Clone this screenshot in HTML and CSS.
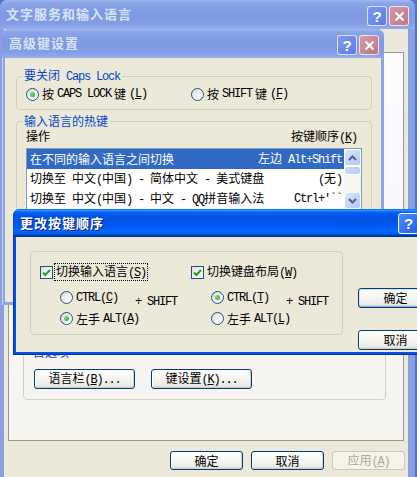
FILE: index.html
```html
<!DOCTYPE html>
<html lang="zh-CN">
<head>
    <meta charset="UTF-8">
    <meta name="viewport" content="width=device-width, initial-scale=1.0">
    <title>更改按键顺序</title>
    <link rel="stylesheet" href="styles.css">
</head>
<body>
<div class="desktop">

    <!-- 文字服务和输入语言 -->
    <div class="win win-main">
        <div class="titlebar inactive">
            <span class="title">文字服务和输入语言</span>
            <span class="tbtn help">?</span>
            <span class="tbtn close"><svg width="11" height="11" viewBox="0 0 11 11"><path d="M1.5 1.5L9.5 9.5M9.5 1.5L1.5 9.5" stroke="#fff" stroke-width="2"/></svg></span>
        </div>
        <div class="win-body">
            <div class="tab-page">
                <fieldset class="group prefs">
                    <legend>首选项</legend>
                    <button class="btn wide">语言栏<span class="en">(<u>B</u>)...</span></button>
                    <button class="btn wide">键设置<span class="en">(<u>K</u>)...</span></button>
                </fieldset>
            </div>
            <div class="dlg-actions">
                <button class="btn">确定</button>
                <button class="btn">取消</button>
                <button class="btn" disabled>应用<span class="en">(<u>A</u>)</span></button>
            </div>
        </div>
    </div>

    <!-- 高级键设置 -->
    <div class="win win-adv">
        <div class="titlebar inactive">
            <span class="title">高级键设置</span>
            <span class="tbtn help">?</span>
            <span class="tbtn close"><svg width="11" height="11" viewBox="0 0 11 11"><path d="M1.5 1.5L9.5 9.5M9.5 1.5L1.5 9.5" stroke="#fff" stroke-width="2"/></svg></span>
        </div>
        <div class="win-body">
            <fieldset class="group caps">
                <legend>要关闭<span class="en"> Caps Lock</span></legend>
                <div class="caps-opts">
                    <label class="opt"><span class="radio on"></span>按<span class="en"> CAPS LOCK </span>键<span class="en">(<u>L</u>)</span></label>
                    <label class="opt"><span class="radio"></span>按<span class="en"> SHIFT </span>键<span class="en">(<u>F</u>)</span></label>
                </div>
            </fieldset>
            <fieldset class="group hotkeys">
                <legend>输入语言的热键</legend>
                <div class="list-head">
                    <span>操作</span>
                    <span>按键顺序<span class="en">(<u>K</u>)</span></span>
                </div>
                <div class="list">
                    <div class="list-rows">
                        <div class="row sel">
                            <span>在不同的输入语言之间切换</span>
                            <span>左边<span class="en"> Alt+Shift</span></span>
                        </div>
                        <div class="row">
                            <span>切换至<span class="en"> </span>中文<span class="en">(</span>中国<span class="en">) - </span>简体中文<span class="en"> - </span>美式键盘</span>
                            <span class="en">(<span class="cn">无</span>)</span>
                        </div>
                        <div class="row">
                            <span>切换至<span class="en"> </span>中文<span class="en">(</span>中国<span class="en">) - </span>中文<span class="en"> - QQ</span>拼音输入法</span>
                            <span class="en">Ctrl+'``</span>
                        </div>
                    </div>
                    <div class="vscroll">
                        <span class="sb-btn"><svg width="9" height="6" viewBox="0 0 9 6"><polyline points="1,5 4.5,1.5 8,5" fill="none" stroke="#4d6185" stroke-width="2"/></svg></span>
                        <span class="sb-thumb"></span>
                        <span class="sb-track"></span>
                        <span class="sb-btn"><svg width="9" height="6" viewBox="0 0 9 6"><polyline points="1,1 4.5,4.5 8,1" fill="none" stroke="#4d6185" stroke-width="2"/></svg></span>
                    </div>
                </div>
            </fieldset>
        </div>
    </div>

    <!-- 更改按键顺序 -->
    <div class="win win-order">
        <div class="titlebar active">
            <span class="title">更改按键顺序</span>
            <span class="tbtn help">?</span>
            <span class="tbtn close"><svg width="11" height="11" viewBox="0 0 11 11"><path d="M1.5 1.5L9.5 9.5M9.5 1.5L1.5 9.5" stroke="#fff" stroke-width="2"/></svg></span>
        </div>
        <div class="win-body order-body">
            <fieldset class="group order">
                <div class="col">
                    <label class="chk-line">
                        <span class="check"><svg width="11" height="11" viewBox="0 0 11 11"><path d="M2 5.5L4.3 8L9 3" fill="none" stroke="#21a121" stroke-width="2"/></svg></span>
                        <span class="focus">切换输入语言<span class="en">(<u>S</u>)</span></span>
                    </label>
                    <div class="combo">
                        <div class="radios">
                            <label class="opt"><span class="radio"></span><span class="en">CTRL(<u>C</u>)</span></label>
                            <label class="opt"><span class="radio on"></span>左手<span class="en"> ALT(<u>A</u>)</span></label>
                        </div>
                        <span class="plus en">+ SHIFT</span>
                    </div>
                </div>
                <div class="col">
                    <label class="chk-line">
                        <span class="check"><svg width="11" height="11" viewBox="0 0 11 11"><path d="M2 5.5L4.3 8L9 3" fill="none" stroke="#21a121" stroke-width="2"/></svg></span>
                        <span class="nofocus">切换键盘布局<span class="en">(<u>W</u>)</span></span>
                    </label>
                    <div class="combo">
                        <div class="radios">
                            <label class="opt"><span class="radio on"></span><span class="en">CTRL(<u>T</u>)</span></label>
                            <label class="opt"><span class="radio"></span>左手<span class="en"> ALT(<u>L</u>)</span></label>
                        </div>
                        <span class="plus en">+ SHIFT</span>
                    </div>
                </div>
            </fieldset>
            <div class="side-btns">
                <button class="btn default">确定</button>
                <button class="btn">取消</button>
            </div>
        </div>
    </div>

</div>
</body>
</html>
```

FILE: styles.css
```css
* {
    box-sizing: border-box;
}
body {
    margin: 0;
    background: #5473c4;
    font-family: "Noto Sans CJK SC", sans-serif;
    font-size: 12px;
    line-height: 14px;
    color: #000;
}
.desktop {
    position: relative;
    width: 417px;
    height: 477px;
    overflow: hidden;
}
.en {
    font-family: "Liberation Mono", monospace;
    font-size: 12px;
    letter-spacing: -1.2px;
}
.en .cn {
    font-family: "Noto Sans CJK SC", sans-serif;
    letter-spacing: 0;
}
u {
    text-decoration: underline;
    text-underline-offset: 1px;
}

/* windows */
.win {
    position: absolute;
    display: flex;
    flex-direction: column;
    border-radius: 7px 7px 0 0;
    overflow: hidden;
    background: #8ea4e6;
}
.win-body {
    flex: 1;
    background: #ece9d8;
    margin: 0 3px 3px;
}
.win-main {
    left: 0;
    top: 0;
    width: 415px;
    height: 500px;
    background: #8a9fe0;
}
.win-main .win-body {
    margin: 0 7px 4px 4px;
}
.win-adv {
    left: 2px;
    top: 29px;
    width: 382px;
    height: 276px;
    box-shadow: inset 1px 0 0 #c9d4f5;
}
.win-order {
    left: 13px;
    top: 209px;
    width: 434px;
    height: 146px;
    background: #0a4fe4;
    box-shadow: inset 0 -1px 0 #0b2fa8, inset 1px 0 0 #0831d9;
}

/* title bars */
.titlebar {
    display: flex;
    align-items: flex-start;
    height: 29px;
    padding: 0 5px 0 7px;
    gap: 2px;
    flex: none;
}
.win-main .titlebar {
    padding: 0 6px 0 6px;
}
.win-order .titlebar {
    height: 28px;
}
.titlebar .title {
    flex: 1;
    font-weight: bold;
    font-size: 13px;
    letter-spacing: 1px;
    line-height: 16px;
    padding-top: 6px;
}
.inactive {
    background: linear-gradient(to bottom, #a3b8ef 0%, #8ca5e8 10%, #7e99e3 45%, #829de4 80%, #96adea 100%);
    color: #d8e4f8;
}
.active {
    background: linear-gradient(to bottom, #0058ee 0%, #3593ff 4%, #288eff 6%, #127dff 8%, #036ffc 10%, #0262ee 14%, #0057e5 20%, #0054e3 24%, #0055eb 56%, #005bf5 66%, #026afe 76%, #0062ef 86%, #0052d6 92%, #0040ab 94%, #003092 100%);
    color: #fff;
}
.active .title {
    text-shadow: 1px 1px 0 #0a1883;
}
.tbtn {
    width: 20px;
    height: 20px;
    margin-top: 6px;
    border-radius: 3px;
    border: 1px solid rgba(255, 255, 255, 0.75);
    display: flex;
    align-items: center;
    justify-content: center;
    color: #fff;
    font: bold 15px "Liberation Sans", sans-serif;
    flex: none;
}
.active .tbtn {
    margin-top: 4px;
    width: 21px;
    height: 21px;
    border-color: #fff;
}
.inactive .help {
    background: linear-gradient(135deg, #7d9cf0, #5a7ce6);
}
.inactive .close {
    background: linear-gradient(135deg, #d59ba8, #bd7685);
}
.active .help {
    background: linear-gradient(135deg, #4d8bff, #1f5ff0);
}
.active .close {
    background: linear-gradient(135deg, #e58668, #c63c1c);
}

/* group boxes */
.group {
    margin: 0;
    border: 1px solid #d0d0bf;
    border-radius: 4px;
    min-width: 0;
}
.group legend {
    color: #0046d5;
    padding: 0 2px;
    margin-left: -4px;
    line-height: 14px;
}

/* radio / checkbox */
.opt {
    display: flex;
    align-items: center;
    gap: 3px;
    white-space: nowrap;
}
.radio {
    position: relative;
    width: 13px;
    height: 13px;
    border-radius: 50%;
    border: 1px solid #1c5180;
    background: linear-gradient(135deg, #dcdcd7, #fff 80%);
    flex: none;
}
.radio.on::after {
    content: "";
    position: absolute;
    left: 3px;
    top: 3px;
    width: 5px;
    height: 5px;
    border-radius: 50%;
    background: radial-gradient(circle at 35% 35%, #7fe07b, #21a121);
}
.check {
    width: 13px;
    height: 13px;
    border: 1px solid #1c5180;
    background: linear-gradient(135deg, #dcdcd7, #fff 80%);
    display: flex;
    align-items: center;
    justify-content: center;
    flex: none;
}

/* buttons */
.btn {
    height: 20px;
    width: 73px;
    padding: 0;
    border: 1px solid #003c74;
    border-radius: 3px;
    background: linear-gradient(to bottom, #fff 0%, #f7f7f4 40%, #ecebe6 85%, #d6d0c5 100%);
    box-shadow: inset -1px -1px 0 #d6d0c5, inset 1px 1px 0 #fff;
    font-family: "Noto Sans CJK SC", sans-serif;
    font-size: 12px;
    line-height: 16px;
    color: #000;
}
.btn:disabled {
    border-color: #c9c7ba;
    color: #aca899;
    background: #f5f4ea;
    box-shadow: none;
}
.btn.default {
    box-shadow: inset 0 -1px 0 #89ade4, inset -1px 0 0 #89ade4, inset 1px 1px 0 #cee7ff;
}
.btn.wide {
    width: 101px;
}

/* main dialog */
.tab-page {
    margin: 23px 0 0 4px;
    width: 396px;
    height: 389px;
    border: 1px solid #919b9c;
    background: linear-gradient(to bottom, #fcfcfe, #f4f3ee);
}
.prefs {
    margin: 292px 0 0 14px;
    width: 363px;
    padding: 10px 10px 10px;
    display: flex;
    gap: 16px;
}
.prefs legend {
    margin-left: -3px;
}
.dlg-actions {
    display: flex;
    justify-content: flex-end;
    gap: 8px;
    margin-top: 10px;
    padding-right: 3px;
}
.dlg-actions .btn {
    height: 19px;
}

/* advanced keys dialog */
.caps {
    margin: 10px 0 0 11px;
    width: 356px;
    padding: 3px 9px 8px;
}
.caps-opts {
    display: grid;
    grid-template-columns: 165px auto;
}
.hotkeys {
    margin: 4px 0 0 11px;
    width: 356px;
    height: 150px;
    padding: 1px 9px 0;
}
.list-head {
    display: flex;
    justify-content: space-between;
    padding-right: 5px;
}
.list {
    display: flex;
    width: 336px;
    height: 62px;
    margin-top: 3px;
    border: 1px solid #7f9db9;
    background: #fff;
}
.list-rows {
    flex: 1;
    overflow: hidden;
}
.row {
    display: flex;
    justify-content: space-between;
    align-items: center;
    height: 20px;
    padding: 0 2px 0 3px;
    white-space: nowrap;
}
.row.sel {
    background: #316ac5;
    color: #fff;
}
.vscroll {
    width: 17px;
    display: flex;
    flex-direction: column;
    background: #f6f5f0;
}
.sb-btn {
    height: 17px;
    border: 1px solid #fff;
    border-radius: 3px;
    background: linear-gradient(135deg, #dbe6fd, #b4c8f6);
    display: flex;
    align-items: center;
    justify-content: center;
}
.sb-thumb {
    height: 9px;
    border: 1px solid #fff;
    border-radius: 3px;
    background: linear-gradient(90deg, #cbdafc, #b7cbf8);
}
.sb-track {
    flex: 1;
}

/* change key sequence dialog */
.order-body {
    display: flex;
    align-items: flex-start;
    padding: 14px 0 0 14px;
}
.order {
    width: 313px;
    height: 84px;
    padding: 11px 0 0 9px;
    display: flex;
}
.col {
    width: 158px;
}
.chk-line {
    display: flex;
    align-items: center;
    gap: 1px;
    white-space: nowrap;
}
.focus,
.nofocus {
    padding: 0 1px;
    border: 1px dotted #000;
}
.nofocus {
    border-color: transparent;
}
.combo {
    display: flex;
    margin: 6px 0 0 20px;
}
.radios {
    width: 75px;
}
.radios .opt {
    height: 21px;
}
.plus {
    margin-top: 8px;
    white-space: nowrap;
}
.side-btns {
    display: flex;
    flex-direction: column;
    gap: 22px;
    margin: 37px 0 0 15px;
}
.side-btns .btn {
    width: 75px;
}
```
